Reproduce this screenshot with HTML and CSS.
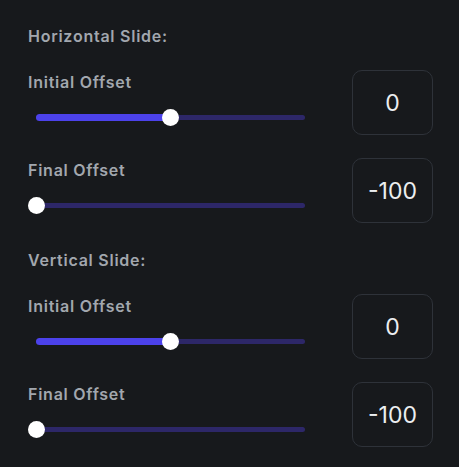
FILE: index.html
```html
<!DOCTYPE html>
<html>
<head>
<meta charset="utf-8">
<link rel="stylesheet" href="styles.css">
</head>
<body>
<div class="panel">
  <section class="group">
    <div class="heading">Horizontal Slide:</div>
    <div class="row">
      <div class="control">
        <div class="label">Initial Offset</div>
        <div class="slider">
          <div class="track"><div class="fill" style="width:50%"></div></div>
          <div class="thumb" style="left:50%"></div>
        </div>
      </div>
      <div class="value">0</div>
    </div>
    <div class="row">
      <div class="control">
        <div class="label">Final Offset</div>
        <div class="slider">
          <div class="track"><div class="fill" style="width:0%"></div></div>
          <div class="thumb" style="left:0%"></div>
        </div>
      </div>
      <div class="value">-100</div>
    </div>
  </section>
  <section class="group">
    <div class="heading">Vertical Slide:</div>
    <div class="row">
      <div class="control">
        <div class="label">Initial Offset</div>
        <div class="slider">
          <div class="track"><div class="fill" style="width:50%"></div></div>
          <div class="thumb" style="left:50%"></div>
        </div>
      </div>
      <div class="value">0</div>
    </div>
    <div class="row">
      <div class="control">
        <div class="label">Final Offset</div>
        <div class="slider">
          <div class="track"><div class="fill" style="width:0%"></div></div>
          <div class="thumb" style="left:0%"></div>
        </div>
      </div>
      <div class="value">-100</div>
    </div>
  </section>
</div>
</body>
</html>
```
FILE: styles.css
```css
html, body {
  margin: 0;
  padding: 0;
  background: #17191c;
  height: 100%;
}
body {
  font-family: Inter, "Liberation Sans", sans-serif;
}
.panel {
  padding: 24px 26px 0 28px;
  display: flex;
  flex-direction: column;
  gap: 25px;
}
.group {
  display: flex;
  flex-direction: column;
  gap: 23px;
}
.heading, .label {
  color: #a2a7ae;
  font-size: 16px;
  font-weight: 600;
  line-height: 20px;
  letter-spacing: 0.75px;
  padding-top: 2px;
}
.heading {
  margin-bottom: 1px;
}
.row {
  display: flex;
  justify-content: space-between;
  align-items: flex-start;
}
.control {
  width: 285px;
  display: flex;
  flex-direction: column;
  gap: 16px;
}
.slider {
  position: relative;
  height: 18px;
  margin: 0 8px;
}
.track {
  position: absolute;
  left: 0;
  right: 0;
  top: 6.5px;
  height: 5px;
  border-radius: 3px;
  background: #2d2768;
}
.fill {
  position: absolute;
  left: 0;
  top: -1px;
  height: 7px;
  border-radius: 4px;
  background: #4c42eb;
}
.thumb {
  position: absolute;
  top: 0.5px;
  width: 17px;
  height: 17px;
  margin-left: -8.5px;
  border-radius: 50%;
  background: #ffffff;
}
.value {
  box-sizing: border-box;
  width: 81px;
  height: 65px;
  border: 1.5px solid #2e3239;
  border-radius: 10px;
  display: flex;
  align-items: center;
  justify-content: center;
  color: #eceef0;
  font-size: 23px;
  font-weight: 400;
}
```
